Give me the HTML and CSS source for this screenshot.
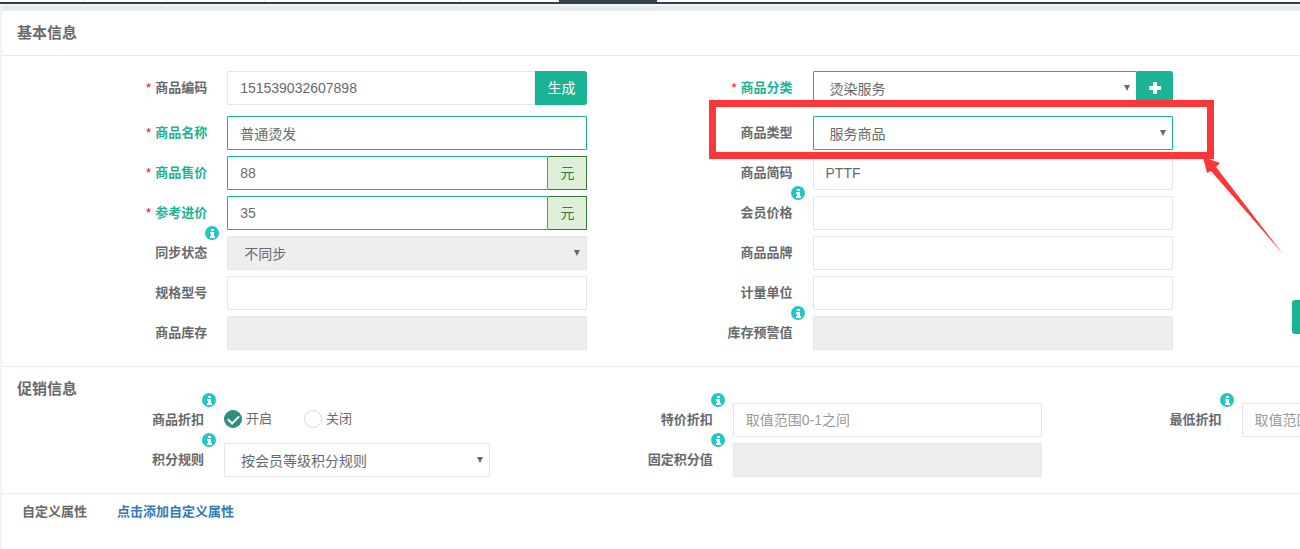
FILE: index.html
```html
<!DOCTYPE html>
<html lang="zh-CN">
<head>
<meta charset="utf-8">
<title>商品信息</title>
<meta name="viewport" content="width=device-width, initial-scale=1">
<link rel="stylesheet" href="styles.css">
</head>
<body>
<svg class="defs" aria-hidden="true">
  <symbol id="info" viewBox="0 0 14 14">
    <circle cx="7" cy="7" r="7" fill="#23c6c8"/>
    <path fill="#fff" d="M6 3h3v2H6zM5 6h4v4h1v2H5v-2h1V8H5z"/>
  </symbol>
</svg>
<div class="tabs"><span class="tab tab-xs"></span><span class="tab tab-s"></span><span class="tab tab-m"></span><span class="tab tab-l"></span><span class="tab tab-l"></span><span class="tab tab-l"></span><span class="tab tab-l"></span><span class="tab tab-l active"></span></div>
<form class="panel">
  <section class="section basic">
    <h2 class="title">基本信息</h2>
    <div class="columns">
      <div class="column">
        <div class="row first">
          <div class="caption"><i class="req">*</i><label for="code">商品编码</label></div>
          <div class="control group"><input class="input" id="code" type="text" value="151539032607898"><button class="btn" type="button">生成</button></div>
        </div>
        <div class="row valid">
          <div class="caption"><i class="req">*</i><label for="name">商品名称</label></div>
          <div class="control"><input class="input" id="name" type="text" value="普通烫发"></div>
        </div>
        <div class="row valid">
          <div class="caption"><i class="req">*</i><label for="price">商品售价</label></div>
          <div class="control group"><input class="input" id="price" type="text" value="88"><span class="addon">元</span></div>
        </div>
        <div class="row valid">
          <div class="caption"><i class="req">*</i><label for="cost">参考进价</label></div>
          <div class="control group"><input class="input" id="cost" type="text" value="35"><span class="addon">元</span></div>
        </div>
        <div class="row">
          <div class="caption"><label for="sync">同步状态</label><svg class="info"><use href="#info"/></svg></div>
          <div class="control select"><select class="input" id="sync" disabled><option>不同步</option></select></div>
        </div>
        <div class="row">
          <div class="caption"><label for="spec">规格型号</label></div>
          <div class="control"><input class="input" id="spec" type="text"></div>
        </div>
        <div class="row">
          <div class="caption"><label for="stock">商品库存</label></div>
          <div class="control"><input class="input" id="stock" type="text" disabled></div>
        </div>
      </div>
      <div class="column">
        <div class="row first valid">
          <div class="caption"><i class="req">*</i><label for="category">商品分类</label></div>
          <div class="control group"><div class="select"><select class="input" id="category"><option>烫染服务</option></select></div><button class="btn" type="button" aria-label="添加分类"><svg class="plus" viewBox="0 0 12 12"><path fill="#fff" d="M4 0h4v4h4v4H8v4H4V8H0V4h4z"/></svg></button></div>
        </div>
        <div class="row chosen">
          <div class="caption"><label for="type">商品类型</label></div>
          <div class="control select"><select class="input" id="type"><option>服务商品</option></select></div>
        </div>
        <div class="row">
          <div class="caption"><label for="short">商品简码</label></div>
          <div class="control"><input class="input" id="short" type="text" value="PTTF"></div>
        </div>
        <div class="row">
          <div class="caption"><label for="member">会员价格</label><svg class="info"><use href="#info"/></svg></div>
          <div class="control"><input class="input" id="member" type="text"></div>
        </div>
        <div class="row">
          <div class="caption"><label for="brand">商品品牌</label></div>
          <div class="control"><input class="input" id="brand" type="text"></div>
        </div>
        <div class="row">
          <div class="caption"><label for="unit">计量单位</label></div>
          <div class="control"><input class="input" id="unit" type="text"></div>
        </div>
        <div class="row">
          <div class="caption"><label for="warn">库存预警值</label><svg class="info"><use href="#info"/></svg></div>
          <div class="control"><input class="input" id="warn" type="text" disabled></div>
        </div>
      </div>
    </div>
  </section>
  <section class="section promo">
    <h2 class="title">促销信息</h2>
    <div class="columns">
      <div class="column">
        <div class="row">
          <div class="caption"><span>商品折扣</span><svg class="info"><use href="#info"/></svg></div>
          <div class="control radios">
            <label class="choice"><input class="radio" type="radio" name="discount" checked>开启</label>
            <label class="choice"><input class="radio" type="radio" name="discount">关闭</label>
          </div>
        </div>
        <div class="row">
          <div class="caption"><label for="rule">积分规则</label><svg class="info"><use href="#info"/></svg></div>
          <div class="control select rule"><select class="input" id="rule"><option>按会员等级积分规则</option></select></div>
        </div>
      </div>
      <div class="column">
        <div class="row">
          <div class="caption"><label for="special">特价折扣</label><svg class="info"><use href="#info"/></svg></div>
          <div class="control"><input class="input" id="special" type="text" placeholder="取值范围0-1之间"></div>
        </div>
        <div class="row">
          <div class="caption"><label for="fixed">固定积分值</label><svg class="info"><use href="#info"/></svg></div>
          <div class="control"><input class="input" id="fixed" type="text" disabled></div>
        </div>
      </div>
      <div class="column">
        <div class="row">
          <div class="caption"><label for="lowest">最低折扣</label><svg class="info"><use href="#info"/></svg></div>
          <div class="control"><input class="input" id="lowest" type="text" placeholder="取值范围0-1之间"></div>
        </div>
      </div>
    </div>
  </section>
  <section class="custom"><span>自定义属性</span><a class="link" href="#">点击添加自定义属性</a></section>
</form>
<button class="side-btn" type="button" aria-label="展开"></button>
<svg class="callout" width="580" height="160" viewBox="0 0 580 160" aria-hidden="true">
  <rect x="3.5" y="3.5" width="498" height="52" fill="none" stroke="#fd3737" stroke-width="7"/>
  <path fill="#fd3737" d="M494 57L511 63L507 67L574 154L502 71L498 73z"/>
</svg>
</body>
</html>
```
FILE: styles.css
```css
* { box-sizing: border-box; }

body {
  margin: 0;
  position: relative;
  min-height: 100vh;
  overflow: hidden;
  display: flex;
  flex-direction: column;
  background: #f3f3f4;
  color: #676a6c;
  font: 13px/20px "Liberation Sans", "Noto Sans CJK SC", sans-serif;
}

.defs { position: absolute; width: 0; height: 0; }

.tabs {
  display: flex;
  height: 4px;
  background: #fff;
  border-bottom: 2px solid #2f4050;
}
.tab { flex: none; border-right: 1px solid #e7eaec; }
.tab-xs { width: 27px; }
.tab-s { width: 57px; }
.tab-m { width: 83px; }
.tab-l { width: 98px; }
.tab.active { background: #2f4050; border: 0; }

.panel {
  flex: 1;
  margin: 2px 0 0 2px;
  border-top: 5px solid #e7eaec;
  background: #fff;
}

.section { border-bottom: 1px solid #e7eaec; padding-bottom: 16px; }

.title {
  margin: 0;
  padding: 12px 15px 4px;
  font-size: 15px;
  line-height: 20px;
  font-weight: 600;
}
.basic .title { padding-bottom: 12px; border-bottom: 1px solid #e7eaec; }

.columns { display: grid; }
.basic .columns { grid-template-columns: 45.1% 45.1%; padding-top: 15px; }
.promo { overflow: hidden; }
.promo .columns { grid-template-columns: repeat(3, 39.9%); padding-left: 23px; }

.column { display: flex; flex-direction: column; gap: 6px; }
.row { display: grid; grid-template-columns: 5fr 8fr; }
.promo .row { grid-template-columns: 9fr 14fr; }
.row.first { margin-bottom: 5px; }

.caption {
  position: relative;
  padding: 7px 20px 7px 0;
  text-align: right;
  font-weight: 700;
}
.valid .caption { color: #1ab394; }
.req { margin-right: 4px; color: #f00; font-style: normal; font-weight: 400; }

.info {
  position: absolute;
  top: -10px;
  right: 8px;
  width: 14px;
  height: 14px;
}

.control { min-width: 0; }
.group { display: flex; }
.group > .input, .group > .select { flex: 1; min-width: 0; }

.input {
  display: block;
  width: 100%;
  height: 34px;
  margin: 0;
  padding: 6px 12px;
  border: 1px solid #e5e6e7;
  border-radius: 1px;
  background: #fff;
  color: #676a6c;
  font: 14px/20px "Liberation Sans", "Noto Sans CJK SC", sans-serif;
  appearance: none;
  outline: 0;
}
.input::placeholder { color: #999; opacity: 1; }
.input:disabled { background: #eee; opacity: 1; }
.valid .input, .chosen .input { border-color: #1ab394; }

.select { position: relative; }
.select .input { padding: 7px 16px 5px; }
.select::after {
  content: "";
  position: absolute;
  top: 14px;
  right: 7px;
  border: 3px solid transparent;
  border-top: 6px solid #676a6c;
  border-bottom: 0;
  pointer-events: none;
}

.btn {
  display: flex;
  align-items: center;
  height: 34px;
  padding: 0 12px;
  border: 0;
  border-radius: 0 3px 3px 0;
  background: #1ab394;
  color: #fff;
  font: 14px/20px "Liberation Sans", "Noto Sans CJK SC", sans-serif;
}
.plus { width: 12px; height: 12px; }

.addon {
  padding: 6px 12px;
  border: 1px solid #3c763d;
  border-left: 0;
  border-radius: 0 1px 1px 0;
  background: #dff0d8;
  color: #3c763d;
  font-size: 14px;
}

.rule { width: 86%; }
.radios { display: flex; gap: 32px; height: 34px; padding-bottom: 2px; }
.choice { display: flex; align-items: center; gap: 4px; }
.radio {
  width: 18px;
  height: 18px;
  margin: 0;
  border: 1px solid #d9d9d2;
  border-radius: 50%;
  background: #fff;
  appearance: none;
  display: grid;
  place-items: center;
}
.radio:checked { border-color: #2b8f7b; background: #2b8f7b; }
.radio:checked::after {
  content: "";
  width: 9px;
  height: 5px;
  margin-bottom: 2px;
  border: solid #fff;
  border-width: 0 0 2px 2px;
  transform: rotate(-45deg);
}

.custom { display: flex; gap: 30px; padding: 8px 20px; font-weight: 700; }
.link { color: #337ab7; text-decoration: none; }

.side-btn {
  position: fixed;
  top: 300px;
  right: 0;
  width: 8px;
  height: 34px;
  padding: 0;
  border: 0;
  border-radius: 3px 0 0 3px;
  background: #1ab394;
}

.callout { position: absolute; left: 709px; top: 100px; pointer-events: none; }
```
